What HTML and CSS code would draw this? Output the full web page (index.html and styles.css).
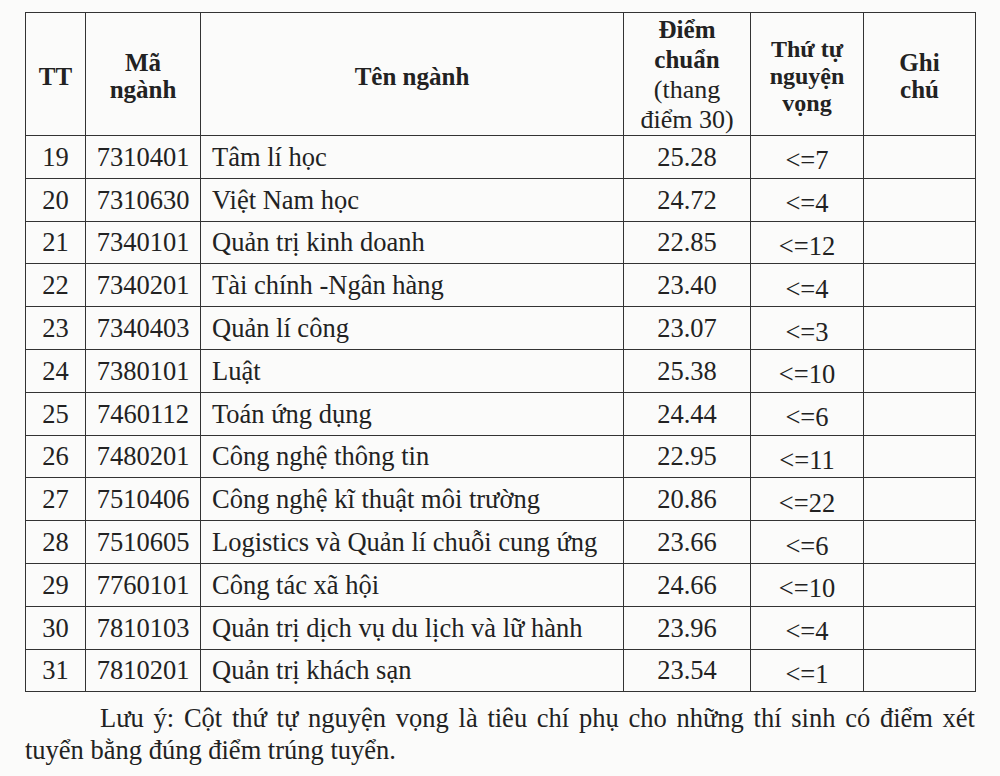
FILE: index.html
```html
<!DOCTYPE html>
<html lang="vi">
<head>
<meta charset="utf-8">
<title>Điểm chuẩn</title>
<link rel="stylesheet" href="styles.css">
</head>
<body>
<div class="page">
  <table class="scores">
    <colgroup>
      <col class="c-tt">
      <col class="c-ma">
      <col class="c-ten">
      <col class="c-diem">
      <col class="c-tt2">
      <col class="c-ghi">
    </colgroup>
    <thead>
      <tr>
        <th>TT</th>
        <th>Mã<br>ngành</th>
        <th>Tên ngành</th>
        <th class="h-diem">Điểm<br>chuẩn<br><span class="reg">(thang<br>điểm 30)</span></th>
        <th class="h-nv">Thứ tự<br>nguyện<br>vọng</th>
        <th>Ghi<br>chú</th>
      </tr>
    </thead>
    <tbody>
      <tr><td class="num">19</td><td class="num">7310401</td><td class="name">Tâm lí học</td><td class="num">25.28</td><td class="nv"><span>&lt;=7</span></td><td></td></tr>
      <tr><td class="num">20</td><td class="num">7310630</td><td class="name">Việt Nam học</td><td class="num">24.72</td><td class="nv"><span>&lt;=4</span></td><td></td></tr>
      <tr><td class="num">21</td><td class="num">7340101</td><td class="name">Quản trị kinh doanh</td><td class="num">22.85</td><td class="nv"><span>&lt;=12</span></td><td></td></tr>
      <tr><td class="num">22</td><td class="num">7340201</td><td class="name">Tài chính -Ngân hàng</td><td class="num">23.40</td><td class="nv"><span>&lt;=4</span></td><td></td></tr>
      <tr><td class="num">23</td><td class="num">7340403</td><td class="name">Quản lí công</td><td class="num">23.07</td><td class="nv"><span>&lt;=3</span></td><td></td></tr>
      <tr><td class="num">24</td><td class="num">7380101</td><td class="name">Luật</td><td class="num">25.38</td><td class="nv"><span>&lt;=10</span></td><td></td></tr>
      <tr><td class="num">25</td><td class="num">7460112</td><td class="name">Toán ứng dụng</td><td class="num">24.44</td><td class="nv"><span>&lt;=6</span></td><td></td></tr>
      <tr><td class="num">26</td><td class="num">7480201</td><td class="name">Công nghệ thông tin</td><td class="num">22.95</td><td class="nv"><span>&lt;=11</span></td><td></td></tr>
      <tr><td class="num">27</td><td class="num">7510406</td><td class="name">Công nghệ kĩ thuật môi trường</td><td class="num">20.86</td><td class="nv"><span>&lt;=22</span></td><td></td></tr>
      <tr><td class="num">28</td><td class="num">7510605</td><td class="name">Logistics và Quản lí chuỗi cung ứng</td><td class="num">23.66</td><td class="nv"><span>&lt;=6</span></td><td></td></tr>
      <tr><td class="num">29</td><td class="num">7760101</td><td class="name">Công tác xã hội</td><td class="num">24.66</td><td class="nv"><span>&lt;=10</span></td><td></td></tr>
      <tr><td class="num">30</td><td class="num">7810103</td><td class="name">Quản trị dịch vụ du lịch và lữ hành</td><td class="num">23.96</td><td class="nv"><span>&lt;=4</span></td><td></td></tr>
      <tr><td class="num">31</td><td class="num">7810201</td><td class="name">Quản trị khách sạn</td><td class="num">23.54</td><td class="nv"><span>&lt;=1</span></td><td></td></tr>
    </tbody>
  </table>
  <p class="note"><span class="note-first">Lưu ý: Cột thứ tự nguyện vọng là tiêu chí phụ cho những thí sinh có điểm xét</span><span class="note-rest">tuyển bằng đúng điểm trúng tuyển.</span></p>
</div>
</body>
</html>
```

FILE: styles.css
```css
html, body {
  margin: 0;
  padding: 0;
  background: #fbfbfa;
}

body {
  font-family: "Liberation Serif", "Times New Roman", serif;
  color: #222222;
}

.page {
  width: 950px;
  padding: 12px 0 0 25px;
}

.scores {
  width: 950px;
  border-collapse: collapse;
  table-layout: fixed;
}

.c-tt { width: 60px; }
.c-ma { width: 115px; }
.c-ten { width: 423px; }
.c-diem { width: 127px; }
.c-tt2 { width: 113px; }
.c-ghi { width: 112px; }

.scores th,
.scores td {
  border: 1.5px solid #333333;
  padding: 0;
}

.scores th {
  height: 116px;
  font-size: 25px;
  font-weight: bold;
  line-height: 27px;
  text-align: center;
  vertical-align: middle;
  padding-top: 4px;
}

.scores th.h-diem {
  line-height: 30px;
  padding-top: 2px;
}

.scores th.h-nv {
  font-size: 24px;
}

.reg {
  font-weight: normal;
  font-size: 26px;
}

.scores td {
  height: 41.8px;
  font-size: 26.5px;
  line-height: 30px;
  vertical-align: middle;
}

.scores td.num {
  text-align: center;
}

.scores td.name {
  padding-left: 11px;
  white-space: nowrap;
}

.scores td.nv {
  text-align: center;
}

.scores td.nv span {
  display: inline-block;
  padding-top: 7px;
}

.note {
  margin: 10px 0 0 0;
  font-size: 26.5px;
  line-height: 32px;
}

.note-first {
  display: block;
  padding-left: 75px;
  text-align: justify;
  text-align-last: justify;
}

.note-rest {
  display: block;
}
```
